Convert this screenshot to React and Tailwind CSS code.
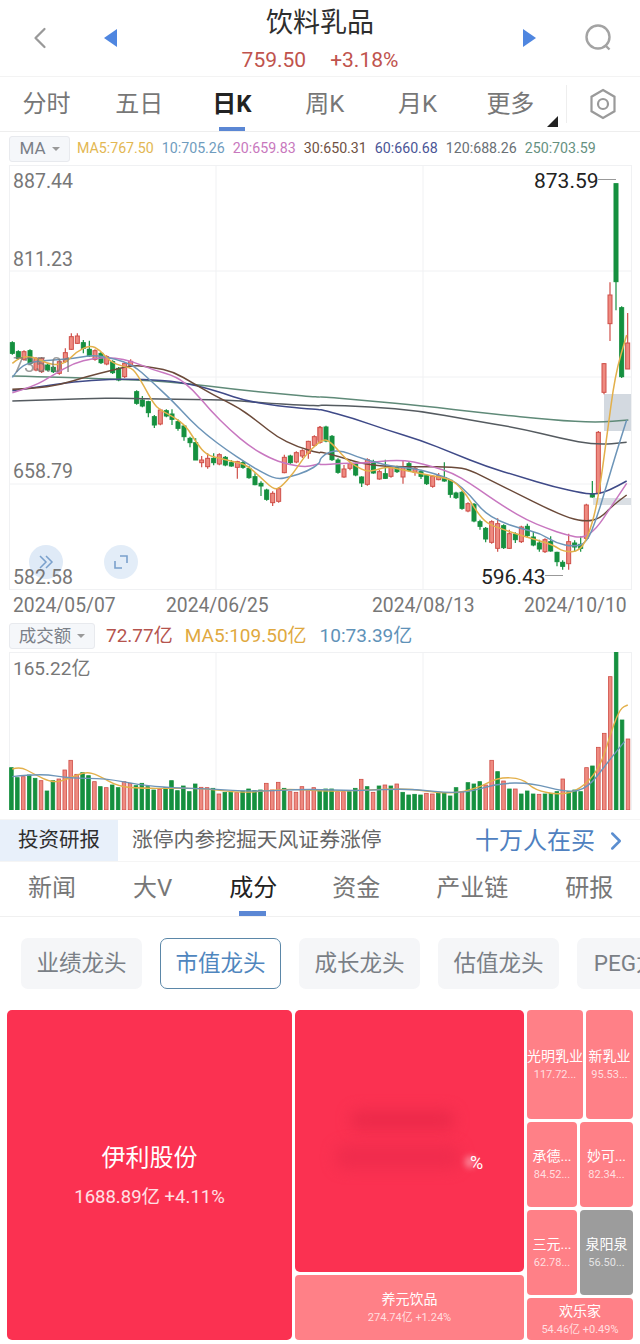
import React from "react";
import { ChevronLeft, ChevronRight } from "lucide-react";

const FONT = 'Roboto, "Noto Sans CJK SC", sans-serif';

// candles: [colour, x, bodyTop, bodyBottom, wickTop, wickBottom] read off the 3x crops
const leftCandles = [
  ["g",37,68,100],["g",55,95,115],["r",72,95,118],["g",90,92,130],["r",108,115,150],["r",125,115,155],["g",143,135,150],["g",160,142,155],
  ["r",178,125,160],["r",196,98,125,85,128],["r",214,50,88,40,90],["r",232,48,70,40,72],["g",250,68,85,60,100],["g",268,88,108,62,110],["r",285,92,118],["g",303,100,128],
  ["r",320,110,132],["g",338,125,158],["g",356,145,180],["r",374,130,170],["r",392,124,138,118,140],["g",410,215,250],["g",427,240,258,228,262],["g",445,245,278,242,292],
  ["g",463,290,315,285,324],["r",481,270,312],["g",499,272,288],["g",516,282,298,268,315],["g",534,305,325,298,332],["g",552,318,350,315,362],["g",570,355,368,350,382],["g",587,368,420,355,420],
  ["r",605,420,428,408,442],["r",623,415,440,400,446],["g",641,415,428,400,436],["r",658,404,432],["g",676,412,435],["g",694,428,438,420,440],["r",712,425,442,422,476],["g",729,428,442,422,446],
  ["g",747,445,473,438,476],["g",765,470,494,460,496],["g",783,490,498,484,528],["g",800,510,538,506,542],["r",818,520,548,514,558],["r",836,506,544],["r",853,412,458,404,460],["g",871,408,428,404,434],
  ["r",889,398,426],["r",907,392,408,388,414],["r",925,364,400,362,416],["r",943,350,376],["r",960,322,360],
];
const rightCandles = [
  ["r",0,788,832],["g",18,786,828],["g",36,814,884],["g",54,885,922,880,926],["r",72,912,936,900,938],["r",90,896,910,890,916],["g",107,897,930],["g",125,936,954,934,966],
  ["r",142,884,958,880,962],["g",160,890,924,884,926],["r",178,920,942,914,944],["g",196,926,940,884,942],["r",213,906,934],["g",231,906,920],["r",249,906,936,888,956],["g",267,896,916,888,920],
  ["r",285,910,922,906,932],["g",303,920,934,914,942],["g",320,932,956],["r",338,934,964],["r",356,932,944,924,946],["g",373,938,948,892,950],["g",391,946,988,944,998],["g",408,984,998,980,1002],
  ["g",426,982,1030],["r",444,1016,1038],["g",462,1018,1068],["g",480,1070,1084,1064,1094],["g",497,1090,1122,1086,1132],["r",515,1070,1132],["r",533,1076,1150,1060,1160],["g",551,1082,1148],
  ["r",568,1106,1150,1094,1152],["g",586,1108,1124,1102,1134],["r",604,1086,1130],["g",622,1084,1112,1076,1118],["g",640,1116,1140,1100,1144],["g",658,1134,1152,1124,1160],["r",675,1124,1160],["g",692,1130,1158,1114,1160],
  ["g",711,1162,1190,1160,1204],["g",728,1192,1204,1186,1214],["r",746,1130,1196,1106,1214],["g",764,1134,1146,1126,1160],["g",782,1138,1150,1114,1160],["r",799,1020,1120],["g",817,986,996,948,998],["r",835,802,985],
  ["r",852,596,682,594,688],["r",870,390,476,352,528],["g",888,56,350,56,436],["g",905,428,635],["r",923,534,612,444,612],
];

const toA = (x, y) => [x / 3, y / 3 + 320];
const toB = (x, y) => [x / 3 + 320, y / 3 + 165];
const pts = (a, b) => [...a.map((p) => toA(p[0], p[1])), ...b.map((p) => toB(p[0], p[1]))];

const lines = [
  { c: "#5f8a78", p: pts([[37,168],[200,172],[330,178],[430,180],[560,190],[700,208],[850,222],[960,232]], [[0,695],[150,708],[300,722],[500,745],[700,765],[830,773],[925,765]]) },
  { c: "#555b60", p: pts([[37,243],[200,238],[300,234],[400,236],[560,238],[700,240],[800,250],[960,258]], [[0,720],[150,725],[300,738],[450,765],[600,790],[720,820],[830,840],[920,832]]) },
  { c: "#3f4a88", p: pts([[37,212],[120,200],[220,185],[330,178],[430,178],[540,185],[640,210],[760,250],[960,270]], [[0,733],[100,760],[200,795],[300,825],[400,865],[500,905],[600,935],[700,965],[790,985],[830,988],[870,975],[920,948]]) },
  { c: "#6b4a3a", p: pts([[37,208],[100,205],[180,195],[260,170],[340,150],[400,135],[460,142],[520,155],[580,190],[640,225],[720,265],[780,310],[830,350],[890,380],[960,400]], [[0,860],[60,875],[120,895],[200,905],[300,905],[400,905],[450,915],[520,950],[600,990],[680,1030],[750,1060],[800,1070],[840,1060],[880,1020],[920,990]]) },
  { c: "#c877c0", p: pts([[37,218],[100,200],[160,165],[220,130],[280,115],[340,112],[400,125],[460,150],[530,170],[580,210],[630,270],[690,330],[750,380],[810,415],[860,432],[920,442],[960,430]], [[0,900],[60,895],[120,895],[180,890],[230,885],[280,890],[340,905],[400,925],[450,955],[500,990],[560,1030],[620,1065],[680,1090],[740,1110],[790,1120],[830,1090],[870,1030],[920,955]]) },
  { c: "#6d95b8", p: pts([[37,172],[60,140],[100,125],[160,120],[220,115],[280,105],[340,115],[400,135],[450,180],[520,245],[570,300],[620,345],[680,390],[740,430],[800,465],[835,478],[870,470],[920,455],[960,430]], [[0,880],[30,858],[70,858],[110,875],[160,890],[220,905],[280,910],[340,925],[400,945],[450,990],[490,1040],[540,1070],[600,1090],[660,1105],[710,1135],[760,1145],[800,1135],[830,1060],[860,960],[890,860],[920,765]]) },
  { c: "#e3b04b", p: pts([[37,130],[60,110],[100,110],[140,130],[175,135],[200,125],[230,95],[270,75],[300,90],[330,125],[370,140],[400,145],[430,195],[460,250],[480,270],[520,290],[560,320],[590,370],[620,405],[660,415],[700,425],[740,435],[780,470],[820,508],[840,505],[880,460],[920,400],[960,365]], [[0,830],[20,822],[50,850],[80,885],[110,905],[140,920],[170,915],[200,905],[250,915],[300,925],[350,935],[400,945],[440,990],[470,1040],[500,1075],[540,1090],[600,1110],[650,1125],[700,1140],[730,1160],[780,1160],[810,1100],[835,1000],[860,820],[885,630],[920,510]]) },
];

// smooth a list of points with quadratic segments through the midpoints
const smooth = (p) => {
  let d = `M${p[0][0]} ${p[0][1]}`;
  for (let i = 1; i < p.length - 1; i++) {
    const mx = (p[i][0] + p[i + 1][0]) / 2;
    const my = (p[i][1] + p[i + 1][1]) / 2;
    d += ` Q${p[i][0]} ${p[i][1]} ${mx} ${my}`;
  }
  const last = p[p.length - 1];
  return d + ` L${last[0]} ${last[1]}`;
};

const volumes = [
  "458g","488g","485r","480g","490g","497r","528g","497g","492r","465r","436r","478r","473g","482g","500r","515g","518r","510g","518g","500r","505r",
  "512g","505g","515g","525g","523r","518g","497g","527g","513g","530g","507g","517r","518r","520g","537r","532g","532g","533r","528g","522g","527g",
  "525g","505r","525r","502r","520g","530r","532r","515r","527r","518r","525g","522g","522g","530r","530r","530g","520g","493r","515g","532r","513g",
  "510r","513g","507r","532g","540g","538g","540g","535r","537r","533g","533g","543g","518g","530r","503g","507g","500g","510r","436r","470g","498r",
  "522g","522r","537g","528g","537g","538r","537g","535g","530g","492r","530g","525g","530g","458r","453g","397r","355r","185r","110g","315g","372r",
];
const volY = (y) => y / 3 + 615;
const volX = (x) => x / 2.45;
const volMa5 = [[30,462],[50,455],[80,475],[130,505],[170,490],[210,470],[240,480],[290,515],[350,520],[420,520],[500,520],[600,535],[700,520],[800,530],[900,525],[1000,520],[1100,538],[1170,520],[1220,487],[1280,490],[1310,525],[1370,540],[1420,525],[1470,460],[1500,340],[1520,280],[1538,270]];
const volMa10 = [[30,485],[100,475],[170,490],[260,490],[340,510],[420,518],[520,522],[620,530],[750,522],[880,528],[1000,520],[1130,538],[1220,505],[1300,503],[1390,533],[1440,520],[1490,440],[1530,380]];

const Candle = ({ d, to }) => {
  const [kind, zx, t, b, wt, wb] = d;
  const [x, y1] = to(zx, t);
  const [, y2] = to(zx, b);
  const [, w1] = to(zx, wt ?? t - 4);
  const [, w2] = to(zx, wb ?? b + 4);
  const red = kind === "r";
  const stroke = red ? "#cf4f48" : "#15903f";
  return (
    <g>
      <line x1={x} x2={x} y1={w1} y2={w2} stroke={stroke} strokeWidth="1.2" />
      <rect x={x - 2} y={y1} width="4" height={y2 - y1} fill={red ? "#ee8a80" : "#15903f"} stroke={stroke} strokeWidth="1" />
    </g>
  );
};

const KLineChart = () => (
  <svg viewBox="0 165 640 425" className="absolute inset-0 h-[425px] w-[640px]">
    <rect x="9.5" y="165.5" width="622" height="424" fill="none" stroke="#f0f1f3" />
    {[271, 377, 484].map((y) => <line key={y} x1="9" x2="632" y1={y} y2={y} stroke="#f0f1f3" />)}
    {[216, 423].map((x) => <line key={x} x1={x} x2={x} y1="165" y2="590" stroke="#f0f1f3" />)}
    <rect x="604" y="394" width="27" height="37" fill="#d3d9e0" />
    <rect x="593" y="498" width="38" height="7" fill="#dadfe4" />
    {leftCandles.map((d) => <Candle key={`a${d[1]}`} d={d} to={toA} />)}
    {rightCandles.map((d) => <Candle key={`b${d[1]}`} d={d} to={toB} />)}
    {lines.map((l) => <path key={l.c} d={smooth(l.p)} fill="none" stroke={l.c} strokeWidth="1.5" />)}
    <line x1="598" x2="616" y1="179.5" y2="179.5" stroke="#999" />
    <line x1="545" x2="563" y1="575.5" y2="575.5" stroke="#999" />
  </svg>
);

const VolumeChart = () => {
  const step = (628 - 11.4) / (volumes.length - 1);
  return (
    <svg viewBox="0 652 640 158" className="absolute inset-0 h-[158px] w-[640px]">
      <line x1="9" x2="632" y1="652.5" y2="652.5" stroke="#f0f1f3" />
      {[9.5, 216, 423, 631.5].map((x) => <line key={x} x1={x} x2={x} y1="652" y2="810" stroke="#f0f1f3" />)}
      {volumes.map((v, i) => {
        const top = volY(parseInt(v));
        const red = v.endsWith("r");
        return (
          <rect key={i} x={11.4 + i * step - 1.8} y={top} width="3.6" height={810 - top}
            fill={red ? "#ee8a80" : "#15903f"} stroke={red ? "#cf4f48" : "#15903f"} strokeWidth="0.8" />
        );
      })}
      <path d={smooth(volMa5.map((p) => [volX(p[0]), volY(p[1])]))} fill="none" stroke="#e3b04b" strokeWidth="1.4" />
      <path d={smooth(volMa10.map((p) => [volX(p[0]), volY(p[1])]))} fill="none" stroke="#6d95b8" strokeWidth="1.4" />
    </svg>
  );
};

const Caret = () => (
  <span className="ml-[6px] h-0 w-0 border-x-[4px] border-t-[4px] border-x-transparent border-t-[#999]" />
);

const Cell = ({ name, value, className = "" }) => (
  <div className={`flex flex-col items-center justify-center overflow-hidden rounded-[4px] text-white ${className}`}>
    <span className="whitespace-nowrap text-[14px] leading-[20px]">{name}</span>
    <span className="whitespace-nowrap text-[11px] leading-[17px] text-white/75">{value}</span>
  </div>
);

const topTabs = ["分时", "五日", "日K", "周K", "月K", "更多"];
const legend = [
  ["MA5:767.50", "text-[#e3b752]"],
  ["10:705.26", "text-[#6f9cbe]"],
  ["20:659.83", "text-[#c878bd]"],
  ["30:650.31", "text-[#6f5144]"],
  ["60:660.68", "text-[#4a5596]"],
  ["120:688.26", "text-[#6a7075]"],
  ["250:703.59", "text-[#66917f]"],
];
const chips = ["业绩龙头", "市值龙头", "成长龙头", "估值龙头", "PEG龙头"];

export default function App() {
  return (
    <div className="h-[1344px] w-[640px] overflow-hidden bg-white" style={{ fontFamily: FONT }}>
      {/* Header */}
      <div className="flex h-[77px] items-center border-b border-[#f3f3f3]">
        <div className="flex w-[124px] items-center">
          <ChevronLeft size={36} strokeWidth={1.5} className="ml-[22px] text-[#999]" />
          <span className="ml-[46px] h-0 w-0 border-y-[9px] border-r-[13px] border-y-transparent border-r-[#4f86e0]" />
        </div>
        <div className="flex flex-1 flex-col items-center">
          <div className="text-[27px] leading-[38px] text-[#2e2e2e]">饮料乳品</div>
          <div className="mt-[6px] flex gap-[24px] text-[21px] leading-[24px] text-[#c0534d]">
            <span>759.50</span>
            <span>+3.18%</span>
          </div>
        </div>
        <div className="flex w-[124px] items-center">
          <span className="ml-[7px] h-0 w-0 border-y-[9px] border-l-[13px] border-y-transparent border-l-[#4f86e0]" />
          <svg width="30" height="30" viewBox="0 0 30 30" fill="none" stroke="#a3a3a3" strokeWidth="2.4" className="ml-[47px]">
            <circle cx="15" cy="14" r="11.5" />
            <path d="M22 22l4.5 4.5" />
          </svg>
        </div>
      </div>

      {/* Period tabs */}
      <div className="flex h-[55px] items-center border-b border-[#eeeeee]">
        {topTabs.map((t) => (
          <div key={t} className={`relative flex h-full w-[92.8px] items-center justify-center text-[24px] ${t === "日K" ? "font-bold text-[#222]" : "text-[#777]"}`}>
            {t}
            {t === "日K" && <span className="absolute bottom-0 h-[4px] w-[26px] bg-[#5b87d4]" />}
            {t === "更多" && <span className="absolute bottom-[4px] right-[-1px] h-0 w-0 border-b-[11px] border-l-[11px] border-b-[#222] border-l-transparent" />}
          </div>
        ))}
        <div className="ml-[9px] h-[38px] border-l border-[#eeeeee]" />
        <svg width="30" height="34" viewBox="0 0 30 34" fill="none" stroke="#9a9a9a" strokeWidth="2.2" className="ml-[21px]">
          <path d="M15 3l11.500 6.700v14.600L15 31 3.500 24.300V9.700z" />
          <circle cx="15" cy="17" r="5" />
        </svg>
      </div>

      {/* MA legend */}
      <div className="flex h-[33px] items-center pl-[9px]">
        <div className="flex h-[26px] w-[61px] items-center justify-center rounded-[3px] border border-[#e8eaee] bg-[#f5f7fa] text-[17px] text-[#7b8088]">
          MA<Caret />
        </div>
        <div className="ml-[7px] flex gap-[8px] text-[14.2px] whitespace-nowrap">
          {legend.map(([t, c]) => <span key={t} className={c}>{t}</span>)}
        </div>
      </div>

      {/* K line */}
      <div className="relative h-[425px] w-[640px] text-[19.5px] text-[#777]">
        <KLineChart />
        <span className="absolute left-[13px] top-[2px]">887.44</span>
        <span className="absolute left-[13px] top-[80px]">811.23</span>
        <span className="absolute left-[13px] top-[186px] opacity-70">735.01</span>
        <span className="absolute left-[13px] top-[292px]">658.79</span>
        <div className="absolute left-[29px] top-[380px] flex h-[34px] w-[34px] items-center justify-center rounded-full bg-[#dfeaf7]">
          <svg width="16" height="16" viewBox="0 0 16 16" fill="none" stroke="#7aa0cc" strokeWidth="1.5">
            <path d="M2 2l6 6-6 6M8 2l6 6-6 6" />
          </svg>
        </div>
        <span className="absolute left-[13px] top-[398px]">582.58</span>
        <span className="absolute left-[534px] top-[1px] text-[21px] text-[#222]">873.59</span>
        <span className="absolute left-[481px] top-[397px] text-[21px] text-[#222]">596.43</span>
        <div className="absolute left-[104px] top-[380px] flex h-[34px] w-[34px] items-center justify-center rounded-full bg-[#e3edf8]">
          <svg width="16" height="16" viewBox="0 0 16 16" fill="none" stroke="#7aa0cc" strokeWidth="1.6">
            <path d="M7 2h7v7M2 7v7h7" />
          </svg>
        </div>
      </div>

      {/* Dates */}
      <div className="flex h-[30px] items-center pl-[13px] pt-[2px] text-[19.3px] text-[#777]">
        <span className="w-[102px]">2024/05/07</span>
        <span className="ml-[51px] w-[102px]">2024/06/25</span>
        <span className="ml-[104px] w-[102px]">2024/08/13</span>
        <span className="ml-[50px] w-[102px]">2024/10/10</span>
      </div>

      {/* Volume legend */}
      <div className="flex h-[32px] items-center pl-[9px] text-[19px] whitespace-nowrap">
        <div className="flex h-[26px] w-[86px] items-center justify-center rounded-[3px] border border-[#e8eaee] bg-[#f5f7fa] text-[17.5px] text-[#7b8088]">
          成交额<Caret />
        </div>
        <span className="ml-[11px] text-[#b5544e]">72.77亿</span>
        <span className="ml-[12px] text-[#e0a93f]">MA5:109.50亿</span>
        <span className="ml-[13px] text-[#5f92b8]">10:73.39亿</span>
      </div>

      {/* Volume */}
      <div className="relative h-[158px] w-[640px]">
        <VolumeChart />
        <span className="absolute left-[13px] top-[3px] text-[19px] text-[#777]">165.22亿</span>
      </div>

      {/* Research strip */}
      <div className="mt-[9px] flex h-[43px] items-center border-y border-[#f5f5f5]">
        <div className="flex h-full w-[118px] items-center justify-center bg-[#e8f0fa] text-[20.5px] text-[#2e2e2e]">投资研报</div>
        <div className="ml-[14px] w-[343px] text-[20.8px] text-[#666]">涨停内参挖掘天风证券涨停</div>
        <div className="text-[24px] text-[#4f81c0]">十万人在买</div>
        <ChevronRight size={30} strokeWidth={2} className="ml-[6px] text-[#5b8ed0]" />
      </div>

      {/* Section tabs */}
      <div className="flex h-[55px] gap-[57px] border-b border-[#f0f0f0] pb-[2px] pl-[28px] text-[24px] text-[#777]">
        <div className="flex items-center">新闻</div>
        <div className="flex items-center">大V</div>
        <div className="relative flex items-center text-[#222]">
          成分
          <span className="absolute bottom-[-2px] left-[10px] h-[5px] w-[27px] bg-[#5b87d4]" />
        </div>
        <div className="-ml-[2px] flex items-center">资金</div>
        <div className="-ml-[1px] flex items-center">产业链</div>
        <div className="flex items-center">研报</div>
      </div>

      {/* Chips */}
      <div className="mt-[21px] flex gap-[18px] overflow-hidden pl-[21px]">
        {chips.map((c) => (
          <div key={c} className={`flex h-[51px] w-[121px] shrink-0 items-center justify-center whitespace-nowrap rounded-[7px] text-[22.5px] ${c === "市值龙头" ? "border border-[#5b87a8] text-[#4f86be]" : "bg-[#f5f6f8] text-[#7a7f86]"}`}>
            {c}
          </div>
        ))}
      </div>

      {/* Treemap */}
      <div className="mt-[21px] flex h-[330px] gap-[3px] pl-[7px]">
        <div className="flex w-[285px] flex-col items-center justify-center rounded-[5px] bg-[#fb3151] text-white">
          <span className="text-[24px] leading-[34px]">伊利股份</span>
          <span className="mt-[10px] text-[18.5px] leading-[24px] text-white/85">1688.89亿 +4.11%</span>
        </div>
        <div className="flex w-[229px] flex-col gap-[3px]">
          <div className="relative h-[262px] rounded-[5px] bg-[#fb3151]">
            <div className="absolute left-[55px] top-[100px] h-[20px] w-[105px] rounded-full bg-[#ec2a4a] blur-[7px]" />
            <div className="absolute left-[40px] top-[135px] h-[24px] w-[125px] rounded-full bg-[#f02c4d] blur-[7px]" />
            <div className="absolute left-[170px] top-[146px] h-[12px] w-[10px] rounded-full bg-white/40 blur-[3px]" />
            <span className="absolute left-[175px] top-[139px] text-[18px] text-white">%</span>
          </div>
          <Cell name="养元饮品" value="274.74亿 +1.24%" className="flex-1 bg-[#ff8087]" />
        </div>
        <div className="flex w-[106px] flex-col gap-[3px]">
          <div className="flex h-[109px] gap-[3px]">
            <Cell name="光明乳业" value="117.72..." className="w-[56px] bg-[#ff8087]" />
            <Cell name="新乳业" value="95.53..." className="flex-1 bg-[#ff8087]" />
          </div>
          <div className="flex h-[85px] gap-[3px]">
            <Cell name="承德..." value="84.52..." className="w-[50px] bg-[#ff8087]" />
            <Cell name="妙可..." value="82.34..." className="flex-1 bg-[#ff8087]" />
          </div>
          <div className="flex h-[85px] gap-[3px]">
            <Cell name="三元..." value="62.78..." className="w-[50px] bg-[#ff8087]" />
            <Cell name="泉阳泉" value="56.50..." className="flex-1 bg-[#9c9c9c]" />
          </div>
          <Cell name="欢乐家" value="54.46亿 +0.49%" className="flex-1 bg-[#ff8087]" />
        </div>
      </div>
    </div>
  );
}
